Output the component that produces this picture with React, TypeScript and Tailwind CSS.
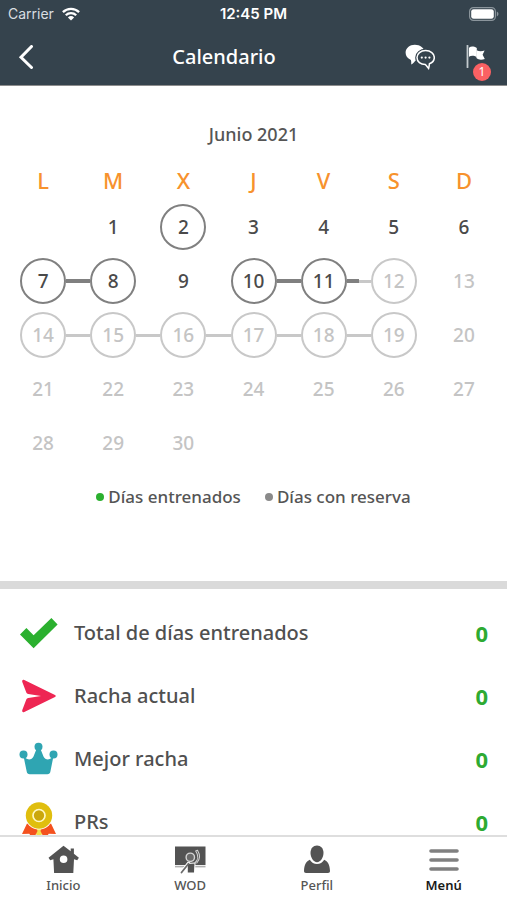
import clsx from 'clsx';

type Mark = 'single' | 'start' | 'middle' | 'end';

const WEEKDAYS = ['L', 'M', 'X', 'J', 'V', 'S', 'D'];

// Days from this one on are still to come and are drawn dimmed
const FIRST_FUTURE_DAY = 12;

const MARKS: Record<number, Mark> = {
  2: 'single',
  7: 'start',
  8: 'end',
  10: 'start',
  11: 'middle',
  12: 'end',
  14: 'start',
  15: 'middle',
  16: 'middle',
  17: 'middle',
  18: 'middle',
  19: 'end',
};

const DAYS = Array.from({ length: 30 }, (_, i) => i + 1);

const BackIcon = () => (
  <svg viewBox="0 0 16 24" className="h-6 w-4" fill="none" stroke="currentColor" strokeWidth="3">
    <path d="M13.5 1.5 3 12.2l10.5 10.3" strokeLinecap="round" strokeLinejoin="miter" />
  </svg>
);

const WifiIcon = () => (
  <svg viewBox="0 0 18 14" className="h-3.5 w-[18px]" fill="none" stroke="currentColor" strokeWidth="2.3">
    <path d="M.9 5.1a11.6 11.6 0 0 1 16.2 0" />
    <path d="M3.8 8.2a7.4 7.4 0 0 1 10.4 0" />
    <path d="M9 13.6 5.9 10.4a4.5 4.5 0 0 1 6.2 0Z" fill="currentColor" stroke="none" />
  </svg>
);

const BatteryIcon = () => (
  <svg viewBox="0 0 30 14" className="h-3.5 w-[30px]">
    <rect x=".6" y=".6" width="25.8" height="12.8" rx="3.8" fill="none" stroke="#8b959c" strokeWidth="1.2" />
    <rect x="2.2" y="2.2" width="22.6" height="9.6" rx="2.4" fill="#fff" />
    <path d="M27.8 4.6c2.2.8 2.2 4 0 4.8Z" fill="#8b959c" />
  </svg>
);

const BUBBLE =
  'M20.6 6.6c-5 0-8.6 3-8.6 6.9 0 4.3 3.6 7 8.3 7 1.3 1.3 2.2 2.7 3.3 4 .5-1.6.6-3.2.8-4.7 2.9-1.1 4.9-3.3 4.9-6.3 0-3.9-3.7-6.9-8.7-6.9Z';

const ChatIcon = () => (
  <svg viewBox="0 0 30 26" className="h-[26px] w-[30px]">
    <path
      d="M9.8.8C4.7.8.6 4.2.6 8.8c0 3.2 2 5.6 5 6.9.5.3.8 2.4.6 4.7 2-.9 3.1-2.3 4.1-3.7C16 16.6 19.5 13 19.5 8.5 19.5 4 15.2.8 9.8.8Z"
      fill="#fff"
    />
    <path d={BUBBLE} fill="#35434d" stroke="#35434d" strokeWidth="3.6" />
    <path d={BUBBLE} fill="none" stroke="#fff" strokeWidth="1.5" />
    <circle cx="16.8" cy="13.6" r="1.1" fill="#fff" />
    <circle cx="20.6" cy="13.6" r="1.1" fill="#fff" />
    <circle cx="24.4" cy="13.6" r="1.1" fill="#fff" />
  </svg>
);

const FlagIcon = () => (
  <svg viewBox="0 0 20 26" className="h-[26px] w-5">
    <rect x=".6" y="1" width="1.8" height="23" rx=".6" fill="#c3cace" />
    <path d="M3 3.7c2-1.6 4.6-1.6 7.8.3V13c-3.2-1.9-5.8-1.6-7.8-.3Z" fill="#fff" />
    <path d="M10.6 6.2c2.6 1.2 5.3 1.2 8 .2l-2 4.4 2.2 4.2c-3.2 1-6.2 1-8.4-1Z" fill="#fff" />
  </svg>
);

const CheckIcon = () => (
  <svg viewBox="0 0 40 34" className="w-10">
    <path d="M1 18.5 7.4 12l7.2 7.3L32.400 2l6.200 6.500-24 23.800Z" fill="#2bb02f" />
  </svg>
);

const StreakIcon = () => (
  <svg viewBox="0 0 40 34" className="w-10">
    <path
      d="M5.3 1 36 16c1 .5 1 1.500 0 2L5.300 33c-1.600.7-2.500-.3-2-2l4-10.500c.4-.9 1-1.300 2-1.500L22 17 9.300 15c-1-.2-1.600-.6-2-1.500L3.300 3C2.800 1.400 3.700.3 5.300 1Z"
      fill="#ee2653"
    />
  </svg>
);

const CrownIcon = () => (
  <svg viewBox="0 0 40 34" className="w-10" fill="#2fa5b2">
    <circle cx="4.5" cy="12.5" r="4" />
    <circle cx="19.5" cy="4.8" r="4" />
    <circle cx="34.5" cy="12.5" r="4" />
    <path d="M4.5 14 6.5 16c3 2.500 6.500 1.500 8-1.500L17.500 7h4l3 7.500c1.500 3 5 4 8 1.500l2-2-3.100 15.600c-.3 1.800-1.300 2.600-3.100 2.600H10.800c-1.800 0-2.800-.8-3.100-2.600Z" />
  </svg>
);

const MedalIcon = () => (
  <svg viewBox="0 0 40 42" className="w-10">
    <path d="m13 24 5 11h4l5-11Z" fill="#f3df4e" />
    <path d="M8 22.500 3 33l7.300-.3L14 39l4.500-9-2-5Z" fill="#f4511e" />
    <path d="M32 22.500 37 33l-7.300-.3L26 39l-4.500-9 2-5Z" fill="#f4511e" />
    <circle cx="20" cy="14.5" r="14" fill="#fff" />
    <circle cx="20" cy="14.5" r="13.2" fill="#e0be0e" />
    <circle cx="20" cy="14.5" r="6" fill="#cba70c" stroke="#fff8c4" strokeWidth="1.7" />
  </svg>
);

const HomeIcon = () => (
  <svg viewBox="0 0 32 30" className="h-[30px] w-8">
    <path
      fillRule="evenodd"
      d="M16.500.8 1.500 12.800l1.700 2.500 3.200-1.100L7.100 28h19.200l.7-13.800 3.200 1.100 1.700-2.500-5-4V3.500h-3.200v2.800ZM16.600 10.500a3.800 3.800 0 1 1 0 7.600 3.800 3.800 0 0 1 0-7.600Z"
      fill="#535353"
    />
  </svg>
);

const WodIcon = () => (
  <svg viewBox="0 0 32 30" className="h-[30px] w-8" strokeLinecap="round" strokeLinejoin="round">
    <rect x="1" y="1.5" width="30.5" height="18.5" fill="#535353" />
    <rect x="1" y="20.8" width="30.5" height="1.6" fill="#b0b0b0" />
    {/* Coach in front of the board, one arm raised */}
    <path d="M8 27 14.500 18.500" stroke="#fff" strokeWidth="3.6" />
    <path d="M13.500 18.500 21 18 20.500 28h-7Z" fill="#535353" stroke="#fff" strokeWidth="1" />
    <path d="M7.500 27.500 14.500 18.800" stroke="#6b6b6b" strokeWidth="1.8" />
    <path d="M20.500 18.500c4-3.500 4-8.500 1.200-12.500l1.800-.8c2.800 4.600 2.600 9-.7 12.800" fill="none" stroke="#d4d4d4" strokeWidth="1.1" />
    <circle cx="16.3" cy="12.3" r="4.2" fill="#6a6a6a" stroke="#d4d4d4" strokeWidth="1.4" />
  </svg>
);

const ProfileIcon = () => (
  <svg viewBox="0 0 32 30" className="h-[30px] w-8" fill="#535353">
    <path d="M16 .4c-3.8 0-6.5 3-6.5 7.4 0 4.700 2.900 9.400 6.500 9.400s6.500-4.700 6.500-9.400C22.500 3.400 19.800.4 16 .4Z" />
    <path d="M8.800 14.700c1.600 2.700 4.200 4.400 7.200 4.400s5.600-1.700 7.200-4.400c3.500 1.500 5.600 5 5.800 11.200 0 1.300-.7 2-2 2H5c-1.300 0-2-.7-2-2 .2-6.200 2.300-9.700 5.800-11.200Z" />
  </svg>
);

const MenuIcon = () => (
  <svg viewBox="0 0 32 30" className="h-[30px] w-8" stroke="#808080" strokeWidth="3.6" strokeLinecap="round">
    <path d="M3 6h26M3 15h26M3 24h26" />
  </svg>
);

const STATS = [
  { label: 'Total de días entrenados', value: 0, Icon: CheckIcon },
  { label: 'Racha actual', value: 0, Icon: StreakIcon },
  { label: 'Mejor racha', value: 0, Icon: CrownIcon },
  { label: 'PRs', value: 0, Icon: MedalIcon },
];

const TABS = [
  { label: 'Inicio', Icon: HomeIcon },
  { label: 'WOD', Icon: WodIcon },
  { label: 'Perfil', Icon: ProfileIcon },
  { label: 'Menú', Icon: MenuIcon, active: true },
];

const DayCell = ({ day }: { day: number }) => {
  const future = day >= FIRST_FUTURE_DAY;
  const mark = MARKS[day];
  const line = future ? 'h-[3px] bg-[#c8c8c8]' : 'h-1 bg-[#808080]';

  return (
    <div className="flex h-[54px] items-center">
      {/* Half connectors meet at the cell edge */}
      <span className={clsx('flex-1', (mark === 'middle' || mark === 'end') && line)} />
      <button
        className={clsx(
          'flex size-[46px] items-center justify-center rounded-full text-[19px] font-medium',
          future ? 'text-[#c4c4c4]' : 'text-[#4a4a4a]',
          mark && 'border-2',
          mark && (future ? 'border-[#c8c8c8]' : 'border-[#808080]'),
        )}
      >
        {day}
      </button>
      <span className={clsx('flex-1', (mark === 'middle' || mark === 'start') && line)} />
    </div>
  );
};

const Header = () => (
  <header className="border-b border-[#8d8d8d] bg-[#35434d] text-white">
    <div className="grid h-7 grid-cols-3 items-center px-2 font-['Inter',sans-serif] text-sm">
      <div className="flex items-center gap-2 text-[#d9dee1]">
        <span>Carrier</span>
        <span className="text-white">
          <WifiIcon />
        </span>
      </div>
      <span className="text-center text-[15px] font-semibold">12:45 PM</span>
      <div className="flex justify-end">
        <BatteryIcon />
      </div>
    </div>
    <div className="grid h-[57px] grid-cols-[1fr_auto_1fr] items-center pr-[21px] pl-[18px]">
      <button aria-label="Volver" className="justify-self-start">
        <BackIcon />
      </button>
      <h1 className="pr-14 text-xl leading-7 font-medium">Calendario</h1>
      <div className="flex items-center justify-end gap-[31px]">
        <button aria-label="Mensajes">
          <ChatIcon />
        </button>
        <button aria-label="Avisos" className="relative">
          <FlagIcon />
          <span className="absolute -right-[5px] top-[19px] flex size-[18px] items-center justify-center rounded-full bg-[#fb6163] text-xs">
            1
          </span>
        </button>
      </div>
    </div>
  </header>
);

const Calendar = () => (
  <section className="px-2 pt-9 pb-[72px]">
    <h2 className="text-center text-lg leading-6 font-medium text-[#555]">Junio 2021</h2>
    <div className="mt-[18px] grid grid-cols-7 text-center text-[22px] leading-8 font-medium text-[#f7922d]">
      {WEEKDAYS.map((d) => (
        <span key={d}>{d}</span>
      ))}
    </div>
    <div className="mt-1 grid grid-cols-7">
      {/* 1 June falls on a Tuesday */}
      <span />
      {DAYS.map((day) => (
        <DayCell key={day} day={day} />
      ))}
    </div>
    <div className="mt-[15px] flex justify-center gap-6 text-[17px] leading-6 font-medium text-[#555]">
      <span className="flex items-center gap-1">
        <i className="size-2 rounded-full bg-[#2bb02f]" />
        Días entrenados
      </span>
      <span className="flex items-center gap-1">
        <i className="size-2 rounded-full bg-[#8a8a8a]" />
        Días con reserva
      </span>
    </div>
  </section>
);

const App = () => {
  return (
    <div className="flex h-screen flex-col bg-white font-['Noto_Sans',sans-serif]">
      <Header />

      <main className="min-h-0 flex-1 overflow-y-auto [scrollbar-width:none]">
        <Calendar />
        <ul className="border-t-8 border-[#dadada] px-[19px] pt-3">
          {STATS.map(({ label, value, Icon }) => (
            <li key={label} className="flex h-[63px] items-center gap-[15px] leading-6">
              <Icon />
              <span className="flex-1 text-[20px] font-medium text-[#505050]">{label}</span>
              <span className="text-[22px] font-bold text-[#2eaa32]">{value}</span>
            </li>
          ))}
        </ul>
      </main>

      <nav className="grid h-[65px] shrink-0 grid-cols-4 border-t-2 border-[#dedede] bg-white">
        {TABS.map(({ label, Icon, active }) => (
          <a
            key={label}
            href="#"
            className={clsx(
              'flex flex-col items-center pt-2 text-[13px] leading-5',
              active ? 'font-semibold text-[#1a1a1a]' : 'font-medium text-[#555]',
            )}
          >
            <Icon />
            {label}
          </a>
        ))}
      </nav>
    </div>
  );
};

export default App;
